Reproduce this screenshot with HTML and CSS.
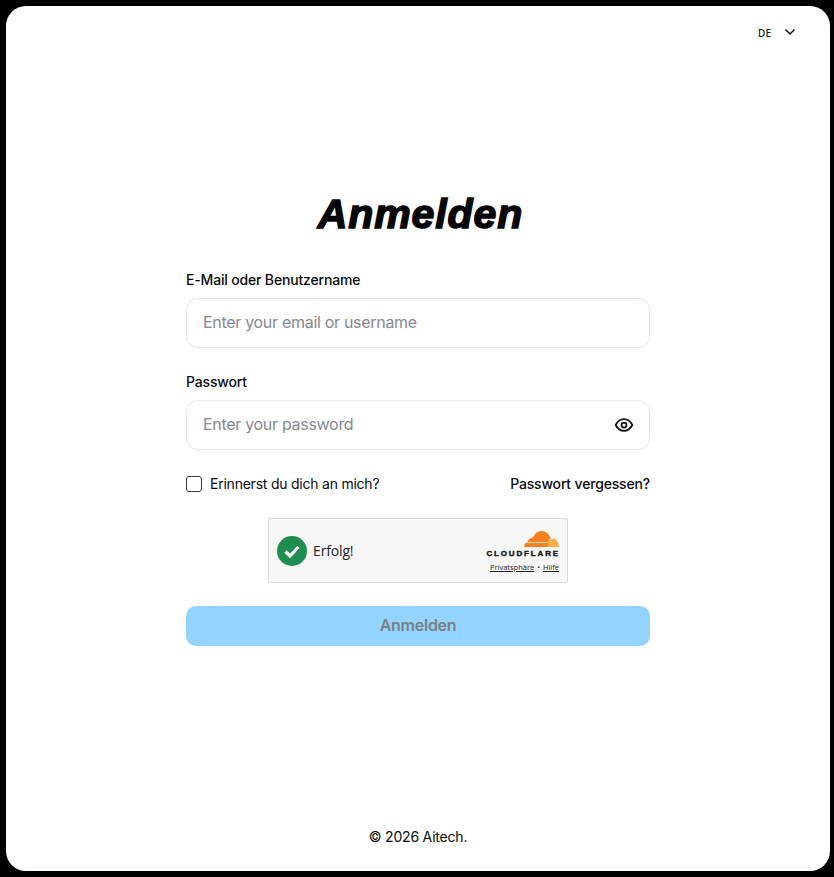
FILE: index.html
```html
<!DOCTYPE html>
<html lang="de">
  <head>
    <meta charset="UTF-8" />
    <meta name="viewport" content="width=device-width, initial-scale=1.0" />
    <title>Anmelden</title>
    <link rel="stylesheet" href="styles.css">
  </head>
  <body>
    <div class="panel">
      <div class="topbar">
        <button class="lang" type="button">
          <span>DE</span>
          <svg width="12" height="8" viewBox="0 0 12 8" fill="none"><path d="M1.500 1.500 6 6l4.500-4.500" stroke="#111" stroke-width="1.500"/></svg>
        </button>
      </div>

      <form class="login">
        <h1 class="title">Anmelden</h1>

        <label class="field-label" for="user">E-Mail oder Benutzername</label>
        <div class="input-box">
          <input id="user" type="text" placeholder="Enter your email or username" />
        </div>

        <label class="field-label second" for="pass">Passwort</label>
        <div class="input-box">
          <input id="pass" type="password" placeholder="Enter your password" />
          <svg class="eye" width="20" height="20" viewBox="0 0 24 24" fill="none" stroke="#111" stroke-width="2.100">
            <path d="M2 12c2.400-4.600 5.800-7 10-7s7.600 2.400 10 7c-2.400 4.600-5.800 7-10 7s-7.600-2.400-10-7z"/>
            <circle cx="12" cy="12" r="3"/>
          </svg>
        </div>

        <div class="options">
          <label class="remember"><span class="check"></span>Erinnerst du dich an mich?</label>
          <a class="forgot" href="#">Passwort vergessen?</a>
        </div>

        <div class="widget">
          <div class="widget-status">
            <svg width="30" height="30" viewBox="0 0 30 30">
              <circle cx="15" cy="15" r="15" fill="#1e8e4e"/>
              <path d="M8.500 15.500l4.500 4.500 8.500-9" fill="none" stroke="#fff" stroke-width="3.200"/>
            </svg>
            <span>Erfolg!</span>
          </div>
          <div class="widget-brand">
            <svg class="cloud" width="35" height="16" viewBox="0 0 35 16">
              <path d="M0 16c.3-3 1.800-5 3.800-5.600.6-1.900 2.600-3.600 5.200-3.800C10.500 2.600 13.700 0 17.500 0c4.500 0 8 3 9.300 7.600L24.500 16z" fill="#f6821f"/>
              <path d="M25 9c1.300-1 3-1.500 4.500-1.200 3 .5 5.200 3.800 5.500 8.200H24z" fill="#fbad41"/>
              <path d="M2.500 11.500h22M24.500 8.700l4 .1" stroke="#fff" stroke-width=".7"/>
            </svg>
            <div class="wordmark">CLOUDFLARE</div>
            <div class="widget-links"><a href="#">Privatsphäre</a> <span class="dot">•</span> <a href="#">Hilfe</a></div>
          </div>
        </div>

        <button class="submit" type="button">Anmelden</button>
      </form>

      <footer class="copy">© 2026 Aitech.</footer>
    </div>
  </body>
</html>
```

FILE: styles.css
```css
* {
  box-sizing: border-box;
}
html,
body {
  height: 100%;
}
body {
  margin: 0;
  padding: 6px 4px 6px 6px;
  background: #000;
  font-family: Inter, "Liberation Sans", sans-serif;
  color: #0a0a0a;
}
.panel {
  height: 100%;
  background: #fff;
  border-radius: 20px;
  display: flex;
  flex-direction: column;
  align-items: center;
}

.topbar {
  width: 100%;
  height: 40px;
  padding: 19px 34px 0 0;
  display: flex;
  justify-content: flex-end;
}
.lang {
  display: flex;
  align-items: flex-start;
  gap: 13px;
  height: 16px;
  padding: 0;
  border: 0;
  background: none;
  font-family: "Noto Sans", sans-serif;
  font-size: 10px;
  font-weight: 500;
  line-height: 16px;
  color: #111;
}
.lang svg {
  margin-top: 3px;
}

.login {
  width: 464px;
  margin-top: 143px;
  display: flex;
  flex-direction: column;
}
.title {
  margin: 0 0 31px;
  height: 50px;
  padding-left: 5px;
  text-align: center;
  font-family: "Liberation Sans", sans-serif;
  font-size: 41px;
  font-weight: 700;
  font-style: italic;
  line-height: 50px;
  letter-spacing: 0.9px;
  color: #050505;
  -webkit-text-stroke: 1.5px #050505;
}
.field-label {
  height: 20px;
  margin-bottom: 8px;
  font-size: 14px;
  font-weight: 450;
  line-height: 20px;
  letter-spacing: -0.17px;
  color: #0a0a0a;
}
.field-label.second {
  margin-top: 24px;
}
.input-box {
  height: 50px;
  padding: 0 15px 0 16px;
  display: flex;
  align-items: center;
  border: 1px solid #e6e6e6;
  border-radius: 12px;
}
.input-box input {
  flex: 1;
  min-width: 0;
  padding: 0 0 2px;
  border: 0;
  outline: 0;
  background: none;
  font-family: inherit;
  font-size: 16px;
  letter-spacing: -0.3px;
  color: #0a0a0a;
}
.input-box input::placeholder {
  color: #85888c;
  opacity: 1;
}

.options {
  height: 20px;
  margin-top: 24px;
  display: flex;
  justify-content: space-between;
  align-items: center;
  font-size: 14px;
  line-height: 20px;
}
.remember {
  display: flex;
  align-items: center;
  gap: 8px;
  letter-spacing: -0.23px;
}
.check {
  width: 16px;
  height: 16px;
  border: 1px solid #3c3c3c;
  border-radius: 3px;
}
.forgot {
  font-weight: 450;
  letter-spacing: -0.17px;
  color: #0a0a0a;
  text-decoration: none;
}

.widget {
  width: 300px;
  height: 65px;
  margin: 24px auto 0;
  padding: 0 8px;
  display: flex;
  justify-content: space-between;
  align-items: center;
  background: #f7f7f7;
  border: 1px solid #d9d9d9;
  border-radius: 2px;
  font-family: "Open Sans", sans-serif;
}
.widget-status {
  display: flex;
  align-items: center;
  gap: 6px;
  font-size: 14px;
  letter-spacing: -0.15px;
  color: #232323;
}
.widget-brand {
  display: flex;
  flex-direction: column;
  align-items: flex-end;
}
.wordmark {
  margin-top: 2px;
  margin-right: -1px;
  font-family: "Liberation Sans", sans-serif;
  font-size: 8px;
  font-weight: 700;
  line-height: 9px;
  letter-spacing: 1.85px;
  color: #111;
  -webkit-text-stroke: 0.4px #111;
}
.widget-links {
  margin-top: 5px;
  font-size: 7.5px;
  line-height: 8px;
  color: #232323;
}
.widget-links a {
  color: #232323;
}
.dot {
  margin: 0 1px;
}

.submit {
  height: 40px;
  margin-top: 23px;
  padding: 0 0 2px;
  border: 0;
  border-radius: 10px;
  background: #92d4ff;
  font-family: inherit;
  font-size: 16px;
  font-weight: 600;
  letter-spacing: -0.25px;
  color: #7b7f84;
}

.copy {
  margin-top: auto;
  margin-bottom: 24px;
  font-size: 14px;
  line-height: 20px;
  letter-spacing: -0.2px;
  color: #0a0a0a;
}
```
